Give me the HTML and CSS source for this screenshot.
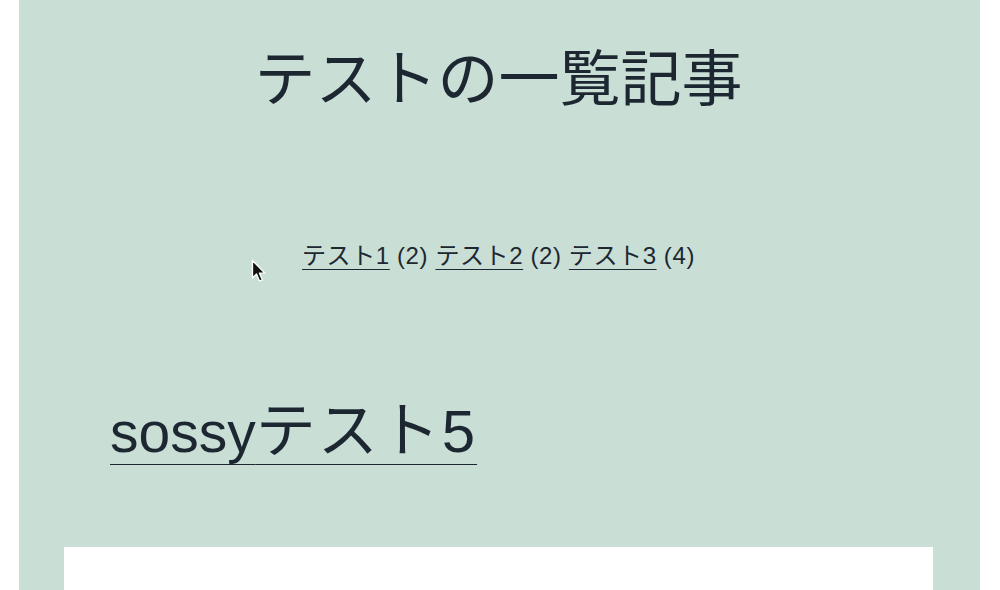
FILE: index.html
```html
<!DOCTYPE html>
<html lang="ja">
<head>
<meta charset="utf-8">
<title>テストの一覧記事</title>
<link rel="stylesheet" href="styles.css">
</head>
<body>
<div class="page">
  <main class="panel">
    <h1 class="title">テストの一覧記事</h1>
    <nav class="cats">
      <a href="#">テスト1</a> (2) <a href="#">テスト2</a> (2) <a href="#">テスト3</a> (4)
    </nav>
    <h2 class="post-title"><a href="#"><span class="latin">sossy</span>テスト5</a></h2>
    <article class="post-body"></article>
  </main>
</div>
<svg class="cursor" width="16" height="25" viewBox="0 0 16 25" aria-hidden="true">
  <path d="M1.5 1.5 L1.5 19 L5.5 15 L8.5 22 L11.3 20.8 L8.4 14.2 L14 14.2 Z" fill="#111" stroke="#fff" stroke-width="1.3" stroke-linejoin="round"/>
</svg>
</body>
</html>
```
FILE: styles.css
```css
html, body {
  margin: 0;
  padding: 0;
  background: #ffffff;
  height: 100%;
  overflow: hidden;
}

body {
  font-family: "Liberation Sans", "Noto Sans CJK JP", sans-serif;
  color: #1d2731;
}

.page {
  padding: 0 20px 0 19px;
}

.panel {
  background: #c9dfd6;
  padding: 35px 47px 0 45px;
  min-height: 700px;
}

.title {
  margin: 0;
  font-family: "Noto Sans CJK JP", sans-serif;
  font-weight: 400;
  font-size: 61px;
  line-height: 80px;
  text-align: center;
}

.cats {
  margin-top: 125px;
  font-size: 24px;
  line-height: 32px;
  text-align: center;
  letter-spacing: 0.6px;
}

.cats a,
.post-title a {
  color: #1d2731;
  text-decoration: underline;
  text-decoration-thickness: 1px;
  text-underline-offset: 0.2em;
}

.post-title {
  margin: 125px 0 0 46px;
  font-weight: 400;
  font-size: 60px;
  line-height: 70px;
  letter-spacing: 2px;
}

.post-title .latin {
  font-size: 57px;
  letter-spacing: 0;
}

.post-body {
  margin-top: 80px;
  background: #ffffff;
  height: 200px;
}

.cursor {
  position: absolute;
  left: 251px;
  top: 259px;
}
```
